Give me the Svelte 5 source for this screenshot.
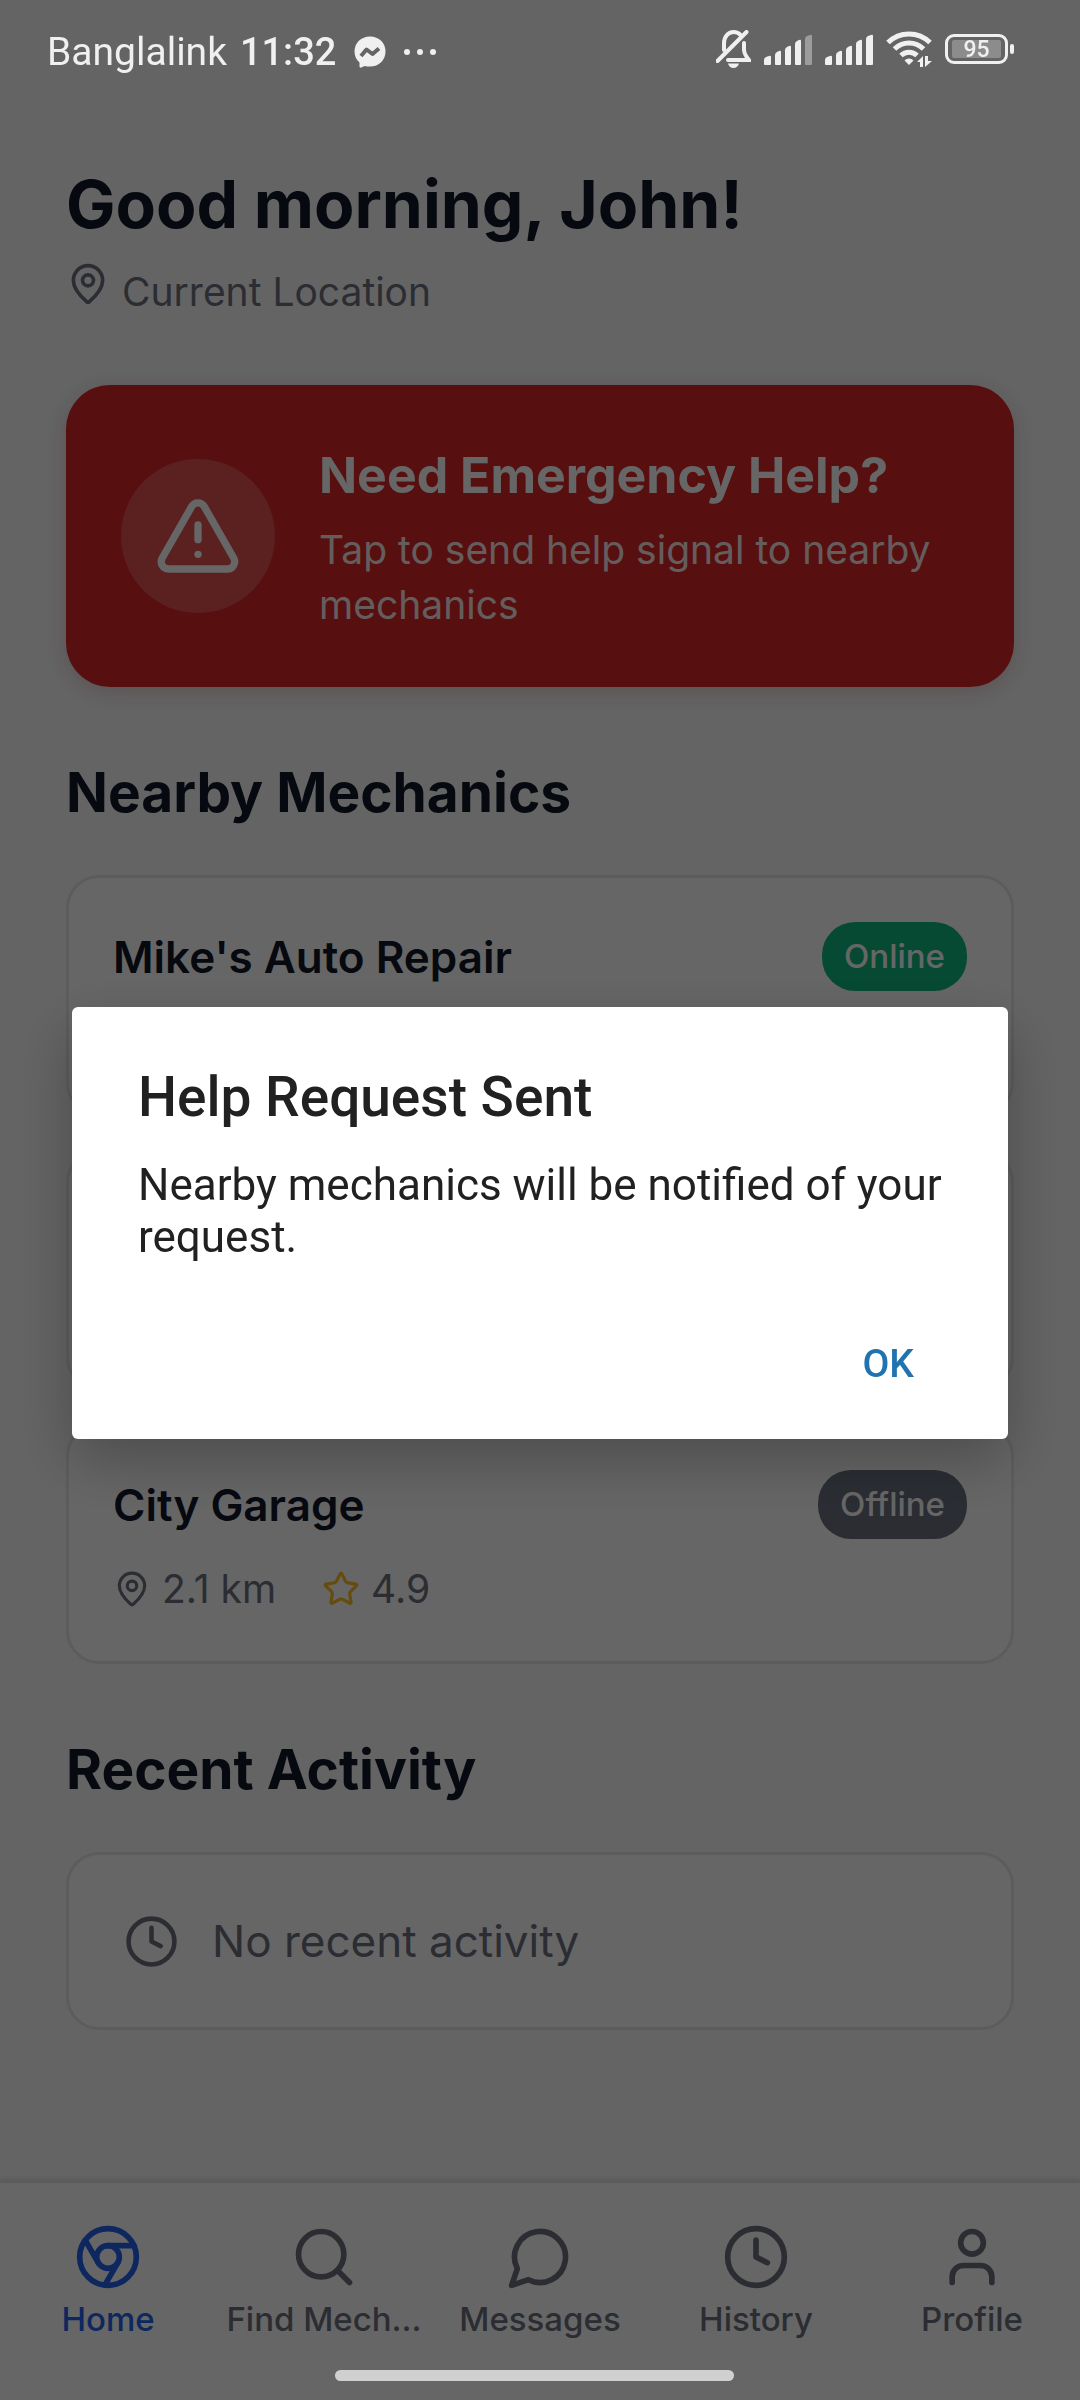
<script>
  const mechanics = [
    { name: "Mike's Auto Repair", distance: '0.8 km', rating: '4.8', status: 'Online' },
    { name: 'Quick Fix Motors', distance: '1.2 km', rating: '4.7', status: 'Online' },
    { name: 'City Garage', distance: '2.1 km', rating: '4.9', status: 'Offline' }
  ];

  const tabs = [
    { label: 'Home', icon: 'chrome' },
    { label: 'Find Mech...', icon: 'search' },
    { label: 'Messages', icon: 'message' },
    { label: 'History', icon: 'clock' },
    { label: 'Profile', icon: 'user' }
  ];

  let activeTab = $state('Home');
  let dialogOpen = $state(true);
</script>

{#snippet icon(name, cls)}
  <svg class="icon {cls}" viewBox="0 0 24 24" aria-hidden="true">
    {#if name === 'pin'}
      <path d="M20 10c0 4.993-5.539 10.193-7.399 11.799a1 1 0 0 1-1.202 0C9.539 20.193 4 14.993 4 10a8 8 0 0 1 16 0" />
      <circle cx="12" cy="10" r="3" />
    {:else if name === 'alert'}
      <path d="m21.73 18-8-14a2 2 0 0 0-3.48 0l-8 14A2 2 0 0 0 4 21h16a2 2 0 0 0 1.73-3" />
      <path d="M12 9v4M12 17h.01" />
    {:else if name === 'star'}
      <path d="M11.525 2.295a.53.53 0 0 1 .95 0l2.31 4.679a2.123 2.123 0 0 0 1.595 1.16l5.166.756a.53.53 0 0 1 .294.904l-3.736 3.638a2.123 2.123 0 0 0-.611 1.878l.882 5.14a.53.53 0 0 1-.771.56l-4.618-2.428a2.122 2.122 0 0 0-1.973 0L6.396 21.01a.53.53 0 0 1-.77-.56l.881-5.139a2.122 2.122 0 0 0-.611-1.879L2.16 9.795a.53.53 0 0 1 .294-.906l5.165-.755a2.122 2.122 0 0 0 1.597-1.16z" />
    {:else if name === 'clock'}
      <circle cx="12" cy="12" r="10" />
      <path d="M12 6v6l4 2" />
    {:else if name === 'chrome'}
      <circle cx="12" cy="12" r="10" />
      <circle cx="12" cy="12" r="4" />
      <path d="M21.17 8H12M3.95 6.06 8.54 14M10.88 21.94 15.46 14" />
    {:else if name === 'search'}
      <circle cx="11" cy="11" r="8" />
      <path d="m21 21-4.3-4.3" />
    {:else if name === 'message'}
      <path d="M7.9 20A9 9 0 1 0 4 16.1L2 22Z" />
    {:else if name === 'user'}
      <path d="M19 21v-2a4 4 0 0 0-4-4H9a4 4 0 0 0-4 4v2" />
      <circle cx="12" cy="7" r="4" />
    {/if}
  </svg>
{/snippet}

{#snippet signal(weak)}
  <svg class="signal" viewBox="0 0 48 32" aria-hidden="true">
    <path d="M0 31v-4q0-2 2-3l3-1q2-1 2 1v7q0 1-1 1H1q-1 0-1-1z" />
    <path d="M11 31V22q0-2 2-3l2-1q2-1 2 1v12q0 1-1 1h-4q-1 0-1-1z" />
    <path d="M21 31V17q0-2 2-3l2-1q2-1 2 1v17q0 1-1 1h-4q-1 0-1-1z" />
    <path d="M31 31V11q0-2 2-3l2-1q2-1 2 1v23q0 1-1 1h-4q-1 0-1-1z" />
    <path class:weak d="M41 31V6q0-2 2-3l3-1q2-1 2 1v28q0 1-1 1h-5q-1 0-1-1z" />
  </svg>
{/snippet}

<div class="screen">
  <header class="status">
    <div class="status-left">
      <span class="carrier">Banglalink</span>
      <span class="time">11:32</span>
      <svg class="messenger" viewBox="0 0 32 32" aria-hidden="true">
        <path class="fill" d="M16 .5C7 .5 .5 7 .5 15.500c0 4.600 1.900 8.300 5 10.900v4.200c0 .9.900 1.400 1.700 1l3.500-1.700c1.600.4 3.400.7 5.300.7 9 0 15.500-6.600 15.500-15.100S25 .5 16 .5z" />
        <path class="cut" d="m7 20 5.500-6.500 6 4.500L25 12.500" />
      </svg>
      <svg class="dots" viewBox="0 0 32 8" aria-hidden="true">
        <circle cx="3" cy="4" r="3" /><circle cx="16" cy="4" r="3" /><circle cx="29" cy="4" r="3" />
      </svg>
    </div>
    <div class="status-right">
      <svg class="bell" viewBox="0 0 35 38" aria-hidden="true">
        <path class="line" d="M8 20v-6.500C8 7 12 2 17.500 2c3 0 5.500 1.200 7 3M28 13v6.500c0 4 2 7 5 10.500H12" />
        <path class="line" d="M1.500 31 30.500 2" />
        <path d="M12 33.500h11c-.6 2.700-2.800 4.500-5.500 4.500s-4.900-1.800-5.500-4.500z" />
      </svg>
      {@render signal(true)}
      {@render signal(false)}
      <svg class="wifi" viewBox="0 0 46 36" aria-hidden="true">
        <path class="arc" d="M2 11.500a30 30 0 0 1 42 0M8.500 18a20.500 20.500 0 0 1 29 0M15 24.500a11.500 11.500 0 0 1 16 0" />
        <path d="M18.500 29.500a6 6 0 0 1 9 0L23 34z" />
        <path d="M31 31l6-6v11h-3v-5zM39 36V25h3v5h4z" />
      </svg>
      <div class="battery"><span class="charge">95</span></div>
    </div>
  </header>

  <main>
    <h1>Good morning, John!</h1>
    <p class="location">{@render icon('pin', 'md')}<span>Current Location</span></p>

    <button class="emergency" type="button" onclick={() => (dialogOpen = true)}>
      <span class="emergency-icon">{@render icon('alert', 'xl')}</span>
      <span class="emergency-text">
        <span class="emergency-title">Need Emergency Help?</span>
        <span class="emergency-sub">Tap to send help signal to nearby mechanics</span>
      </span>
    </button>

    <section>
      <h2>Nearby Mechanics</h2>
      <div class="list">
        {#each mechanics as m}
          <article class="card">
            <div class="card-head">
              <h3>{m.name}</h3>
              <span class="badge" class:offline={m.status === 'Offline'}>{m.status}</span>
            </div>
            <div class="details">
              <span class="detail">{@render icon('pin', 'sm')}{m.distance}</span>
              <span class="detail">{@render icon('star', 'sm gold')}{m.rating}</span>
            </div>
          </article>
        {/each}
      </div>
    </section>

    <section>
      <h2>Recent Activity</h2>
      <div class="card empty">{@render icon('clock', 'lg')}<span>No recent activity</span></div>
    </section>
  </main>

  <nav aria-label="Main">
    {#each tabs as tab}
      <a href="#{tab.icon}" class:active={activeTab === tab.label} onclick={() => (activeTab = tab.label)}>
        {@render icon(tab.icon, 'tab')}
        <span class="tab-label">{tab.label}</span>
      </a>
    {/each}
  </nav>
</div>

{#if dialogOpen}
  <div class="scrim">
    <div class="dialog" role="alertdialog" aria-modal="true" aria-labelledby="dlg-title" aria-describedby="dlg-text">
      <h2 id="dlg-title" class="dialog-title">Help Request Sent</h2>
      <p id="dlg-text">Nearby mechanics will be notified of your request.</p>
      <div class="actions">
        <button type="button" onclick={() => (dialogOpen = false)}>OK</button>
      </div>
    </div>
  </div>
{/if}
<div class="handle"></div>

<style>
  :global(body) {
    background: #f9fafb;
  }

  .screen {
    min-height: 100vh;
    display: flex;
    flex-direction: column;
    background: #f9fafb;
    color: #111827;
    font-family: Inter, 'Noto Sans', sans-serif;
  }

  h1, h2, h3, p {
    margin: 0;
  }

  button {
    border: 0;
    font-family: inherit;
    cursor: pointer;
  }

  .icon {
    flex: none;
    fill: none;
    stroke: currentColor;
    stroke-width: 2;
    stroke-linecap: round;
    stroke-linejoin: round;
  }
  .sm { width: 38px; height: 38px; }
  .md { width: 44px; height: 44px; }
  .lg { width: 55px; height: 55px; }
  .xl { width: 88px; height: 88px; }
  .tab { width: 68px; height: 68px; }
  .gold { color: #fbbf24; }

  /* System status bar, drawn above the scrim */
  .status {
    position: relative;
    z-index: 2;
    display: flex;
    justify-content: space-between;
    align-items: center;
    height: 98px;
    padding: 0 66px 0 47px;
    color: #f0f0f0;
    font-family: Roboto, sans-serif;
    font-size: 38px;
    line-height: 44px;
  }
  .status svg {
    display: block;
    fill: #f0f0f0;
  }
  .status-left, .status-right {
    display: flex;
    align-items: center;
  }
  .status-left { gap: 13px; padding-top: 5px; }
  .status-right { gap: 13px; }
  .carrier { font-size: 39px; }
  .time { font-weight: 500; }
  .messenger { width: 32px; height: 32px; margin-left: 5px; }
  .messenger .cut {
    fill: none;
    stroke: #646464;
    stroke-width: 4;
    stroke-linejoin: round;
  }
  .dots { width: 32px; height: 8px; margin-left: 5px; }
  .bell { width: 35px; height: 38px; }
  .bell .line {
    fill: none;
    stroke: #f0f0f0;
    stroke-width: 4;
    stroke-linecap: round;
  }
  .signal { width: 48px; height: 32px; }
  .weak { opacity: 0.4; }
  .wifi { width: 46px; height: 36px; }
  .wifi .arc {
    fill: none;
    stroke: #f0f0f0;
    stroke-width: 5;
  }
  .battery {
    position: relative;
    box-sizing: border-box;
    width: 63px;
    height: 30px;
    margin-right: 6px;
    padding: 3px 4px;
    border: 3px solid #f0f0f0;
    border-radius: 9px;
  }
  .battery::after {
    content: '';
    position: absolute;
    right: -9px;
    top: 7px;
    width: 4px;
    height: 10px;
    border-radius: 2px;
    background: #f0f0f0;
  }
  .charge {
    display: block;
    height: 18px;
    border-radius: 2px;
    background: #8c8c8c;
    font-size: 23px;
    font-weight: 500;
    line-height: 20px;
    text-align: center;
  }

  main {
    flex: 1;
    padding: 62px 66px;
  }
  h1 {
    font-size: 66px;
    line-height: 88px;
    font-weight: 700;
  }
  .location {
    display: flex;
    align-items: baseline;
    gap: 12px;
    margin: 14px 0 66px;
    color: #6b7280;
    font-size: 39px;
    line-height: 55px;
  }

  .emergency {
    display: flex;
    align-items: center;
    gap: 44px;
    width: 100%;
    padding: 55px;
    border-radius: 44px;
    background: #dc2626;
    box-shadow: 0 5px 22px rgba(140, 20, 20, 0.2);
    color: #fff;
    text-align: left;
  }
  .emergency-icon {
    flex: none;
    display: grid;
    place-items: center;
    width: 154px;
    height: 154px;
    border-radius: 50%;
    background: rgba(255, 255, 255, 0.2);
  }
  .emergency-text {
    display: flex;
    flex-direction: column;
    gap: 11px;
  }
  .emergency-title {
    font-size: 50px;
    line-height: 71px;
    font-weight: 700;
  }
  .emergency-sub {
    font-size: 39px;
    line-height: 55px;
    opacity: 0.9;
  }

  section {
    margin-top: 66px;
  }
  section h2 {
    margin-bottom: 44px;
    font-size: 55px;
    line-height: 78px;
    font-weight: 700;
  }
  .list {
    display: grid;
    gap: 33px;
  }
  .card {
    padding: 44px;
    border: 3px solid #e5e7eb;
    border-radius: 33px;
    background: #fff;
  }
  .card-head {
    display: flex;
    justify-content: space-between;
    align-items: center;
  }
  h3 {
    font-size: 44px;
    line-height: 60px;
    font-weight: 600;
  }
  .badge {
    padding: 11px 22px;
    border-radius: 33px;
    background: #10b981;
    color: #fff;
    font-size: 33px;
    line-height: 47px;
    font-weight: 500;
  }
  .badge.offline { background: #6b7280; }
  .details {
    display: flex;
    gap: 46px;
    margin-top: 22px;
    color: #6b7280;
    font-size: 39px;
    line-height: 56px;
  }
  .detail {
    display: flex;
    align-items: center;
    gap: 11px;
  }
  .empty {
    display: flex;
    align-items: center;
    gap: 33px;
    padding: 55px;
    color: #6b7280;
    font-size: 44px;
    line-height: 62px;
  }

  nav {
    display: grid;
    grid-template-columns: repeat(5, minmax(0, 1fr));
    padding: 40px 0 61px;
    border-top: 3px solid #e5e7eb;
    background: #fff;
    box-shadow: 0 -1px 5px rgba(0, 0, 0, 0.12);
  }
  nav a {
    display: flex;
    flex-direction: column;
    align-items: center;
    gap: 8px;
    color: #6b7280;
    text-decoration: none;
  }
  nav a.active { color: #2563eb; }
  .tab-label {
    font-size: 33px;
    line-height: 40px;
    font-weight: 500;
    white-space: nowrap;
  }

  .scrim {
    position: fixed;
    inset: 0;
    z-index: 1;
    display: grid;
    align-items: center;
    padding: 46px 72px 0;
    background: rgba(0, 0, 0, 0.6);
    font-family: Roboto, sans-serif;
  }
  .dialog {
    padding: 58px 66px 25px;
    border-radius: 6px;
    background: #fff;
    box-shadow: 0 22px 60px rgba(0, 0, 0, 0.26);
    color: #212121;
  }
  .dialog-title {
    font-size: 55px;
    line-height: 64px;
    font-weight: 500;
  }
  .dialog p {
    margin-top: 30px;
    font-size: 44px;
    line-height: 52px;
  }
  .actions {
    display: flex;
    justify-content: flex-end;
    margin-top: 52px;
  }
  .actions button {
    padding: 0 28px;
    background: none;
    color: #2173b0;
    font-size: 39px;
    line-height: 99px;
    font-weight: 500;
  }

  /* Gesture bar */
  .handle {
    position: fixed;
    z-index: 2;
    left: 31%;
    bottom: 19px;
    width: 37%;
    height: 11px;
    border-radius: 6px;
    background: #d0d0d0;
  }
</style>
